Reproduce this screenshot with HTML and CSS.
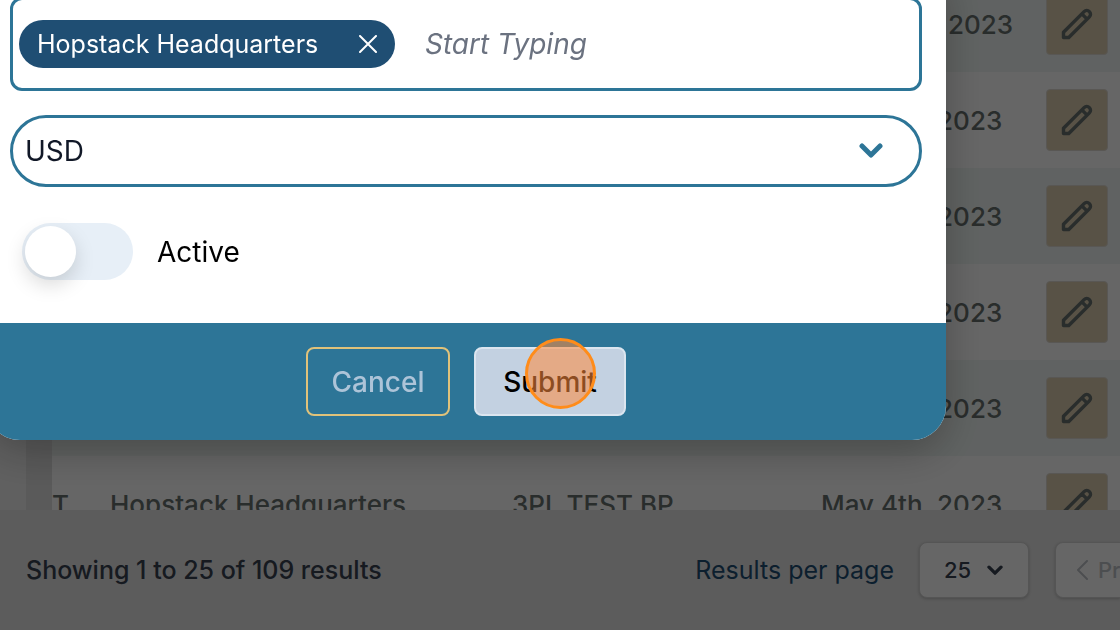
FILE: index.html
```
<!DOCTYPE html>
<html lang="en">
<head>
  <meta charset="UTF-8">
  <title>Business Partners</title>
  <meta name="viewport" content="width=device-width, initial-scale=1">
  <link rel="stylesheet" href="styles.css">
</head>
<body>

  <svg class="sprite" aria-hidden="true">
    <symbol id="pencil" viewBox="0 0 24 24">
      <path d="M15.232 5.232l3.536 3.536m-2.036-5.036a2.5 2.5 0 113.536 3.536L6.5 21.036H3v-3.572L16.732 3.732z" fill="none" stroke="currentColor" stroke-width="2.3" stroke-linecap="round" stroke-linejoin="round"/>
    </symbol>
    <symbol id="chevron" viewBox="0 0 24 16">
      <path d="M3 3l9 9 9-9" fill="none" stroke="currentColor" stroke-width="5" stroke-linecap="round" stroke-linejoin="round"/>
    </symbol>
  </svg>

  <!-- Table -->
  <main class="table-area">
    <div class="table-scroll">
      <table class="results">
        <tbody>
          <tr>
            <td class="type">T</td>
            <td class="warehouse">Hopstack Headquarters</td>
            <td class="partner">3PL TEST BP</td>
            <td class="date">May 10th, 2023</td>
            <td><button class="edit" aria-label="Edit"><svg><use href="#pencil"/></svg></button></td>
          </tr>
          <tr>
            <td class="type">T</td>
            <td class="warehouse">Hopstack Headquarters</td>
            <td class="partner">3PL TEST BP</td>
            <td class="date">May 4th, 2023</td>
            <td><button class="edit" aria-label="Edit"><svg><use href="#pencil"/></svg></button></td>
          </tr>
          <tr>
            <td class="type">T</td>
            <td class="warehouse">Hopstack Headquarters</td>
            <td class="partner">3PL TEST BP</td>
            <td class="date">May 4th, 2023</td>
            <td><button class="edit" aria-label="Edit"><svg><use href="#pencil"/></svg></button></td>
          </tr>
          <tr>
            <td class="type">T</td>
            <td class="warehouse">Hopstack Headquarters</td>
            <td class="partner">3PL TEST BP</td>
            <td class="date">May 4th, 2023</td>
            <td><button class="edit" aria-label="Edit"><svg><use href="#pencil"/></svg></button></td>
          </tr>
          <tr>
            <td class="type">T</td>
            <td class="warehouse">Hopstack Headquarters</td>
            <td class="partner">3PL TEST BP</td>
            <td class="date">May 4th, 2023</td>
            <td><button class="edit" aria-label="Edit"><svg><use href="#pencil"/></svg></button></td>
          </tr>
          <tr>
            <td class="type">T</td>
            <td class="warehouse">Hopstack Headquarters</td>
            <td class="partner">3PL TEST BP</td>
            <td class="date">May 4th, 2023</td>
            <td><button class="edit" aria-label="Edit"><svg><use href="#pencil"/></svg></button></td>
          </tr>
        </tbody>
      </table>
    </div>
  </main>

  <!-- Pagination -->
  <footer class="pagination">
    <p class="summary">Showing 1 to 25 of 109 results</p>
    <label class="per-page" for="perPage">Results per page</label>
    <div class="page-size">
      <select id="perPage"><option>25</option><option>50</option></select>
      <svg><use href="#chevron"/></svg>
    </div>
    <button class="prev">
      <svg viewBox="0 0 12 20"><path d="M11 1L2 10l9 9" fill="none" stroke="currentColor" stroke-width="2" stroke-linecap="round" stroke-linejoin="round"/></svg>
      Prev
    </button>
  </footer>

  <!-- Modal -->
  <div class="overlay">
    <form class="modal" onsubmit="return false">
      <div class="modal-body">
        <div class="tags">
          <span class="tag">
            Hopstack Headquarters
            <button type="button" aria-label="Remove Hopstack Headquarters">
              <svg viewBox="0 0 18 18"><path d="M1 1l16 16M17 1L1 17" fill="none" stroke="currentColor" stroke-width="2" stroke-linecap="round"/></svg>
            </button>
          </span>
          <input type="text" placeholder="Start Typing" aria-label="Warehouses">
        </div>
        <div class="currency">
          <select aria-label="Currency"><option>USD</option><option>EUR</option></select>
          <svg><use href="#chevron"/></svg>
        </div>
        <div class="toggle-row">
          <input class="toggle" type="checkbox" id="active">
          <label for="active">Active</label>
        </div>
      </div>
      <div class="modal-footer">
        <button type="button" class="btn cancel">Cancel</button>
        <button type="submit" class="btn submit">Submit<span class="click-marker"></span></button>
      </div>
    </form>
  </div>

</body>
</html>
```
FILE: styles.css
```
* { box-sizing: border-box; }
body {
  margin: 0; height: 100vh; overflow: hidden;
  display: flex; flex-direction: column;
  font-family: Inter, sans-serif; font-size: 25px; font-weight: 500;
  background: #e5e5e5;
}
button, input, select { font: inherit; }
svg { display: block; }
.sprite { position: absolute; width: 0; height: 0; }

/* Table */
.table-area { flex: 1; min-height: 0; overflow: hidden; padding-left: 26px; background: #f0f0f0; }
.table-scroll { padding-left: 26px; background: #e0e0e0; overflow: hidden; }
.results {
  width: 100%; margin-top: -24px; table-layout: fixed; border-collapse: collapse;
  color: #67706e; font-size: 26px; white-space: nowrap;
}
.results tr { height: 96px; background: #f0f6f4; }
.results tr:nth-child(even) { background: #fff; }
.results td { padding: 0; vertical-align: middle; }
.type { width: 58px; }
.warehouse { width: 402px; }
.partner { width: 309px; }
.date { width: 225px; }
.edit {
  display: flex; align-items: center; justify-content: center;
  width: 62px; height: 62px; padding: 0;
  background: #dccdb0; border: 1px solid #dfdad2; border-radius: 4px; color: #67706e;
}
.edit svg { width: 36px; height: 36px; }

/* Pagination */
.pagination { display: flex; align-items: center; height: 120px; padding-left: 26px; background: #e5e5e5; }
.summary { margin: 0; color: #374151; }
.per-page { margin-left: auto; font-weight: 400; color: #1f4e73; }
.page-size { display: grid; align-items: center; width: 110px; height: 56px; margin: 0 26px 0 25px; color: #374151; }
.page-size select {
  grid-area: 1 / 1; width: 100%; height: 100%; padding: 0 24px;
  appearance: none; background: #fff; border: 1px solid #d4d4d4; border-radius: 8px; color: inherit;
  font-size: 22px; box-shadow: 0 1px 3px rgba(0,0,0,0.2);
}
.page-size svg { grid-area: 1 / 1; justify-self: end; width: 16px; height: 11px; margin-right: 26px; pointer-events: none; }
.prev {
  display: flex; align-items: center; gap: 10px; width: 65px; height: 56px; padding: 0 0 0 20px; overflow: hidden;
  background: #fff; border: 1px solid #d4d4d4; border-right: 0; border-radius: 8px 0 0 8px; color: #bfc3c8;
  font-size: 22px; box-shadow: 0 1px 3px rgba(0,0,0,0.2);
}
.prev svg { flex: none; width: 12px; height: 20px; }

/* Modal */
.overlay { position: fixed; inset: 0; overflow: hidden; background: rgba(0,0,0,0.6); }
.modal {
  position: absolute; top: -27px; left: -14px; right: 174px;
  background: #fff; border-radius: 0 0 34px 34px; box-shadow: 0 12px 40px rgba(0,0,0,0.25);
  font-size: 28px; font-weight: 400;
}
.modal-body { padding: 24px 24px 43px; }
.tags {
  display: flex; align-items: center; gap: 30px; padding: 20px 6px;
  border: 3px solid #2d7597; border-radius: 12px;
}
.tag {
  display: flex; align-items: center; justify-content: space-between; width: 376px; height: 48px; padding: 0 18px;
  background: #1f4e73; border-radius: 24px; color: #fff; font-size: 25px;
}
.tag button { padding: 0; background: none; border: 0; color: inherit; }
.tag svg { width: 18px; height: 18px; }
.tags input { flex: 1; min-width: 0; height: 48px; padding: 0; border: 0; outline: none; background: none; }
.tags input::placeholder { color: #6b7280; font-style: italic; opacity: 1; }

.currency { display: grid; align-items: center; height: 72px; margin-top: 24px; }
.currency select {
  grid-area: 1 / 1; width: 100%; height: 100%; padding: 0 12px;
  appearance: none; background: #fff; border: 3px solid #2d7597; border-radius: 36px; color: #111827;
}
.currency svg { grid-area: 1 / 1; justify-self: end; width: 24px; height: 16px; margin-right: 39px; color: #2d7597; pointer-events: none; }

.toggle-row { display: flex; align-items: center; gap: 24px; margin: 36px 0 0 12px; color: #000; }
.toggle { appearance: none; width: 111px; height: 57px; margin: 0; padding: 3px; background: #e7eff7; border-radius: 29px; }
.toggle::before {
  content: ""; display: block; width: 51px; height: 51px; border-radius: 50%;
  background: #fff; box-shadow: 0 8px 20px rgba(0,0,0,0.15);
}
.toggle:checked::before { margin-left: auto; }

.modal-footer {
  display: flex; justify-content: center; gap: 24px; padding: 24px 0;
  background: #2d7597; border-radius: 0 0 34px 34px;
}
.btn { height: 69px; padding: 0; border-radius: 8px; font-weight: 500; }
.cancel { width: 144px; background: none; border: 2px solid #e0c27a; color: #adc4d8; }
.submit { position: relative; width: 152px; background: #c3d1e1; border: 2px solid #dbe5ef; color: #000; }
.click-marker {
  position: absolute; top: -11px; left: 49px; width: 71px; height: 71px;
  background: rgba(255,138,60,0.55); border: 3px solid #ff8c1a; border-radius: 50%;
}
```
